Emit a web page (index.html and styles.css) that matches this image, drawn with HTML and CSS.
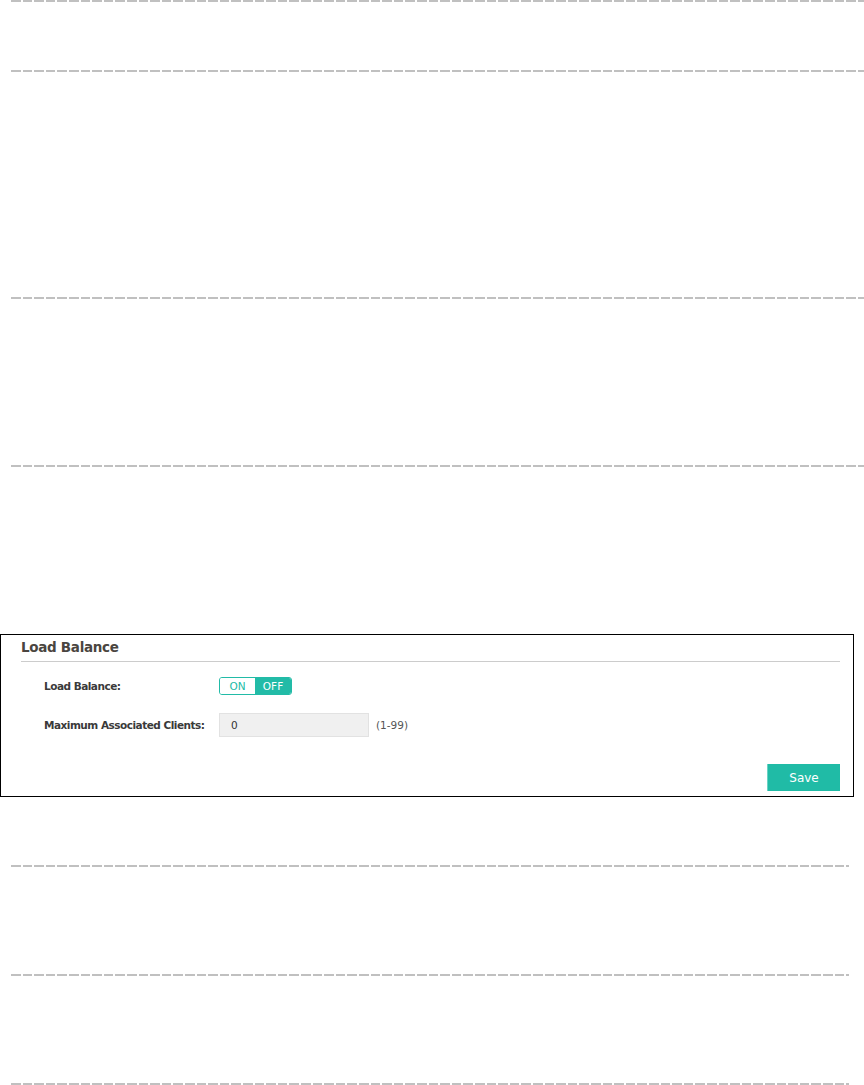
FILE: index.html
```html
<!DOCTYPE html>
<html>
<head>
<meta charset="utf-8">
<link rel="stylesheet" href="styles.css">
</head>
<body>
<div class="page">
  <div class="dash dash-wide"></div>
  <div class="gap gap-68"></div>
  <div class="dash dash-wide"></div>
  <div class="gap gap-225"></div>
  <div class="dash dash-wide"></div>
  <div class="gap gap-166"></div>
  <div class="dash dash-wide"></div>
  <div class="gap gap-167"></div>

  <section class="panel">
    <h2 class="panel-title">Load Balance</h2>
    <div class="form-row row-first">
      <label class="form-label">Load Balance:</label>
      <div class="toggle">
        <span class="toggle-on">ON</span>
        <span class="toggle-off">OFF</span>
      </div>
    </div>
    <div class="form-row row-second">
      <label class="form-label">Maximum Associated Clients:</label>
      <div class="input">0</div>
      <span class="hint">(1-99)</span>
    </div>
    <div class="actions">
      <button class="save">Save</button>
    </div>
  </section>

  <div class="gap gap-68"></div>
  <div class="dash dash-narrow"></div>
  <div class="gap gap-107"></div>
  <div class="dash dash-narrow"></div>
  <div class="gap gap-107"></div>
  <div class="dash dash-narrow"></div>
</div>
</body>
</html>
```

FILE: styles.css
```css
html, body {
  margin: 0;
  padding: 0;
  background: #ffffff;
}

.page {
  display: flex;
  flex-direction: column;
  width: 864px;
  overflow: hidden;
  font-family: "DejaVu Sans", Verdana, sans-serif;
  color: #333333;
}

.dash {
  height: 2px;
  margin-left: 11px;
  background-image: repeating-linear-gradient(to right, #c0c0c0 0, #c0c0c0 9.5px, transparent 9.5px, transparent 11.6px);
}

.dash-wide { width: 853px; }
.dash-narrow { width: 838px; }

.gap-68 { height: 68px; }
.gap-225 { height: 225px; }
.gap-166 { height: 166px; }
.gap-167 { height: 167px; }
.gap-107 { height: 107px; }

.panel {
  box-sizing: border-box;
  width: 854px;
  border: 1px solid #000000;
  padding: 4px 13px 5px 20px;
}

.panel-title {
  margin: 0;
  font-size: 13.5px;
  line-height: 16px;
  font-weight: bold;
  letter-spacing: -0.3px;
  color: #4a4540;
  padding-bottom: 6px;
  border-bottom: 1px solid #cccccc;
}

.form-row {
  display: flex;
  align-items: center;
  height: 24px;
  padding-left: 23px;
}

.row-first { margin-top: 12px; }
.row-second { margin-top: 15px; }

.form-label {
  width: 175px;
  flex: none;
  font-size: 10.5px;
  font-weight: bold;
  letter-spacing: -0.5px;
  color: #3a3a3a;
}

.toggle {
  display: flex;
  box-sizing: border-box;
  width: 73px;
  height: 18px;
  border: 1px solid #22bba7;
  border-radius: 3px;
  overflow: hidden;
  font-size: 10.5px;
  line-height: 16px;
}

.toggle-on {
  width: 35px;
  text-align: center;
  color: #22bba7;
  background: #ffffff;
}

.toggle-off {
  flex: 1;
  text-align: center;
  color: #ffffff;
  background: #22bba7;
}

.input {
  box-sizing: border-box;
  width: 150px;
  height: 24px;
  background: #f0f0f0;
  border: 1px solid #e2e2e2;
  padding-left: 11px;
  font-size: 10.5px;
  line-height: 22px;
  color: #333333;
}

.hint {
  margin-left: 7px;
  font-size: 10.5px;
  color: #555555;
}

.actions {
  display: flex;
  justify-content: flex-end;
  margin-top: 27px;
}

.save {
  width: 73px;
  height: 27px;
  border: none;
  border-left: 1px solid #6ad3c4;
  background: #20bba6;
  color: #ffffff;
  font-family: "DejaVu Sans", Verdana, sans-serif;
  font-size: 12px;
  font-weight: normal;
  padding: 0;
}
```
